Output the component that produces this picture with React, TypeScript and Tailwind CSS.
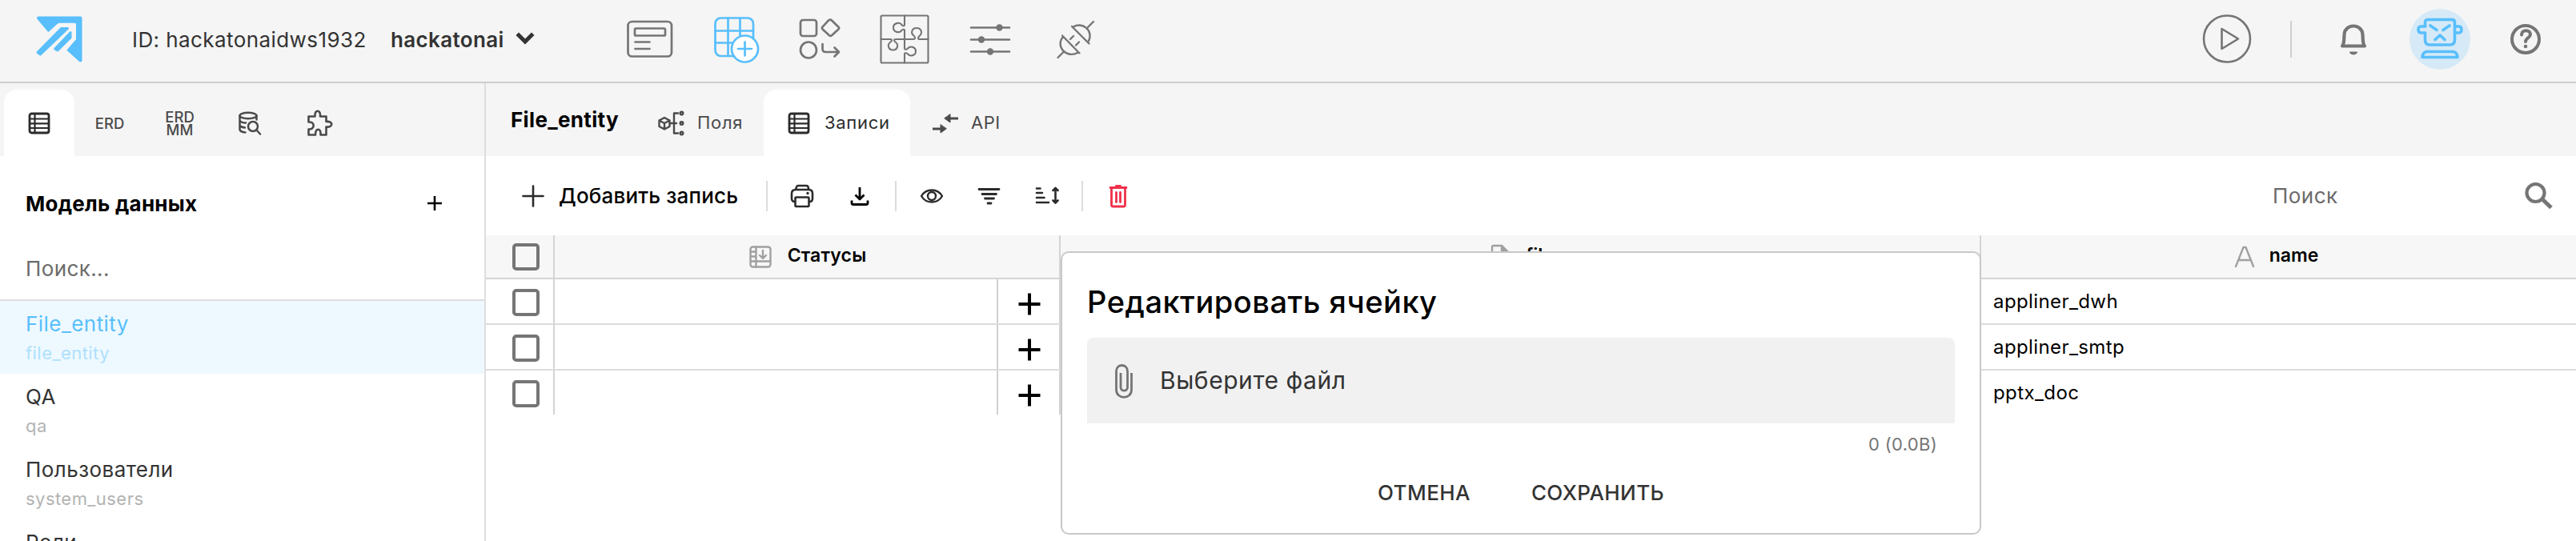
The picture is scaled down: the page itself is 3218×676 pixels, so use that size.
import type { ReactNode } from "react";

type IconProps = { w: number; h: number; className?: string; sw?: number; children: ReactNode };

function Icon({ w, h, className = "", sw = 2.7, children }: IconProps) {
  return (
    <svg
      width={w}
      height={h}
      viewBox={`0 0 ${w} ${h}`}
      fill="none"
      stroke="currentColor"
      strokeWidth={sw}
      strokeLinecap="round"
      strokeLinejoin="round"
      className={`block shrink-0 ${className}`}
    >
      {children}
    </svg>
  );
}

const Logo = () => (
  <Icon w={60} h={60} className="text-[#58bffc]">
    <path
      d="M4 3.500H56.500V56.500L41.500 43L53 30.500V10Q53 8.500 51.500 8.500H30Q28.500 8.500 27.500 9.500L17 19Z"
      fill="currentColor"
      strokeWidth="4"
    />
    <path
      d="M16 21.500L27.500 11Q29 9.800 31 9.800H48Q51 9.800 51 13V30L39.500 43.500L8 52L2 44Z"
      fill="#f5f5f5"
      stroke="none"
    />
    <path d="M32.500 16.500H40.500L6.500 49L3 46.500Z" fill="currentColor" strokeWidth="3" />
    <path d="M44.200 21.500V28L28 44L24.500 42Z" fill="currentColor" strokeWidth="2.600" />
  </Icon>
);

const TableIcon = () => (
  <Icon w={28} h={28} sw={2.2}>
    <rect x="2" y="2" width="24" height="24" rx="2.500" strokeWidth="2.800" />
    <path d="M8.500 2V26M2 8.500H26M2 14.300H26M2 20H26" />
  </Icon>
);

const Divider = () => <div className="h-[38px] w-[2px] shrink-0 bg-[#dcdcdc]" />;

const Checkbox = () => <div className="h-[34px] w-[34px] shrink-0 rounded-[5px] border-4 border-[#757575]" />;

function Header() {
  return (
    <header className="flex h-[104px] w-full shrink-0 items-center border-b-2 border-[#cecece] bg-[#f5f5f5] pb-[4px] text-[#757575]">
      <div className="ml-[44px] mr-[61px]">
        <Logo />
      </div>
      <div className="flex w-[617px] items-center whitespace-nowrap text-[26px] text-[#333]">
        <span className="w-[323px] tracking-[0.420px]">ID: hackatonaidws1932</span>
        <span className="w-[156px] font-semibold tracking-[0.350px]">hackatonai</span>
        <Icon w={24} h={16} sw={5} className="-mt-[2px]">
          <path d="M4 4L12 12L20 4" strokeLinecap="square" strokeLinejoin="miter" />
        </Icon>
      </div>
      <Icon w={60} h={48} className="mr-[48px]">
        <rect x="2.500" y="2" width="54.500" height="43.500" rx="5" />
        <rect x="11" y="10.500" width="38" height="9" rx="1.500" />
        <path d="M11.500 27.500H29.500M11.500 36H29.500" />
      </Icon>
      <Icon w={60} h={60} className="mr-[47px] text-[#58bffc]">
        <rect x="3.500" y="3.500" width="47.500" height="47.500" rx="7" />
        <path d="M19.500 3.500V51M34.500 3.500V51M3.500 19.500H51M3.500 34.500H51" />
        <circle cx="40.500" cy="42" r="16.500" fill="white" />
        <path d="M40.500 33.500V50.500M32 42H49" />
      </Icon>
      <Icon w={54} h={54} className="mr-[48px]">
        <rect x="3" y="3" width="20" height="20" rx="3" />
        <path d="M38.300 3.200Q40.500 2 42 3.500L50.500 11.700Q51.700 13 50.500 14.500L42 22.300Q40.500 23.500 39 22.300L30.500 14.500Q29.300 13 30.500 11.700Z" />
        <circle cx="13" cy="40.500" r="10" />
        <path d="M30.500 33V39Q30.500 43 34.500 43H50.500M45.500 37.500L51 43L45.500 48.500" />
      </Icon>
      <Icon w={62} h={62} className="mr-[50px]" sw={2.1}>
        <rect x="1.500" y="1.500" width="59" height="59" rx="1.500" />
        <path d="M31 1.500V13C31 15 28 14.500 27 12.500C24.500 9.500 17 10.500 17 16.500C17 22.500 24.500 23.500 27 20.500C28 18.500 31 18 31 20V42.500C31 44.500 34 44 35 42.500C38 39 45 40.500 45 46C45 51.500 38 53 35 49.500C34 48 31 47.500 31 49.500V60.500" />
        <path d="M1.500 31H13C16 31 15 33.500 13.500 34.500C9 37.500 10.500 44.500 16.500 44.500C22.500 44.500 24 37.500 19.500 34.500C18 33.500 17 31 20 31H42C45 31 44 28.500 43 27C38 23.500 40 17 46 17C52 17 54 23.500 49.500 27C48 28.500 47 31 50 31H60.500" />
      </Icon>
      <Icon w={52} h={40} className="mr-[56px]" sw={2.6}>
        <path d="M2 5.500H50M2 20.500H50M2 35.500H50" />
        <g fill="currentColor" stroke="none">
          <circle cx="37.500" cy="5.500" r="4.200" />
          <circle cx="15" cy="20.500" r="4.200" />
          <circle cx="26" cy="35.500" r="4.200" />
        </g>
      </Icon>
      <Icon w={50} h={50} sw={2.4}>
        <path d="M20 9L41.500 30.500M21 10C32 2 49 14 40 29M40 10L47 3" />
        <path d="M8 20.500L29.500 42.500M9 22C-1 34 13 50 28 41.500M9.500 41L2.500 48M18 25L22 21M25 32.500L29 28.500" />
      </Icon>
      <Icon w={62} h={62} className="ml-auto mr-[48px]" sw={2.6}>
        <circle cx="31" cy="30.500" r="29" />
        <path d="M24.500 18V43L45 30.500Z" />
      </Icon>
      <div className="mr-[57px] h-[46px] w-[2px] bg-[#cfcfcf]" />
      <Icon w={40} h={42} className="mr-[50px]" sw={4.2}>
        <path d="M6 29.500C9 26 8 20 8.500 15C9.500 1 30.500 1 31.500 15C32 20 31 26 34 29.500Z" />
        <path d="M16 37.500Q20 41.500 24 37.500Z" fill="currentColor" strokeWidth="2" />
      </Icon>
      <div className="mr-[47px] flex h-[76px] w-[76px] items-center justify-center rounded-full bg-[#d6e9f7] text-[#58bffc]">
        <Icon w={60} h={56} sw={3.6}>
          <path d="M11.500 12V7Q11.500 3.500 15 3.500H45Q48.500 3.500 48.500 7V29Q48.500 35 42.500 35H17.500Q11.500 35 11.500 29V20H6.500Q3 20 3 16Q3 12 6.500 12H12M48.500 12H53.500Q57 12 57 16Q57 20 53.500 20H48.500" />
          <path d="M18 11L26 16.500M42 11L34 16.500M24 28.500L30 23L36 28.500" />
          <path d="M14 43.500H46Q51.500 44 52 50.500H8Q8.500 44 14 43.500Z" />
        </Icon>
      </div>
      <Icon w={44} h={42} className="mr-[41px]" sw={4}>
        <circle cx="22" cy="21" r="17" />
        <path d="M17 15.500C17 8.500 28 8.500 28 15C28 19 22 19.500 22 24" />
        <circle cx="22" cy="30" r="2.300" fill="currentColor" stroke="none" />
      </Icon>
    </header>
  );
}

const models = [
  { title: "File_entity", code: "file_entity", active: true },
  { title: "QA", code: "qa", active: false },
  { title: "Пользователи", code: "system_users", active: false },
];

function Sidebar() {
  return (
    <aside className="flex w-[607px] shrink-0 flex-col border-r-2 border-[#dedede]">
      <div className="flex h-[91px] shrink-0 items-end bg-[#f5f5f5] pl-[5px] text-[#4a4a4a]">
        <div className="flex h-[83px] w-[88px] items-center justify-center rounded-t-[16px] bg-white text-[#2b2b2b]">
          <TableIcon />
        </div>
        <div className="flex h-[83px] w-[88px] items-center justify-center pt-[2px] text-[18.500px] font-medium">
          ERD
        </div>
        <div className="flex h-[83px] w-[87px] flex-col items-center justify-center pt-[2px] text-[18.500px] font-medium leading-[15.500px]">
          <span>ERD</span>
          <span>MM</span>
        </div>
        <div className="flex h-[83px] w-[88px] items-center justify-center">
          <Icon w={30} h={30} sw={2.5}>
            <ellipse cx="13" cy="5.500" rx="10.500" ry="3.700" />
            <path d="M2.500 5.500V23Q3.500 26 9.500 26.500M23.500 5.500V10.500M2.500 11.500Q4 14.500 10 14.500M2.500 17.500Q4 20 9 20.500" />
            <circle cx="19" cy="19" r="6" />
            <path d="M23.500 23.500L28 28.500" />
          </Icon>
        </div>
        <div className="flex h-[83px] w-[86px] items-center justify-center">
          <Icon w={34} h={34} sw={2.6}>
            <path d="M3.500 8.500H11.500C10.500 -0.500 19 -0.500 18 8.500H25.500V15C34.500 14 34.500 22.500 25.500 21.500V31.500H18.500C19.500 22.500 11.500 22.500 12 31.500H3.500V24.500C12 25 11.500 14.500 3.500 15.500Z" />
          </Icon>
        </div>
      </div>
      <div className="flex h-[118px] shrink-0 items-center justify-between pl-[32px] pr-[50px] text-[26px] font-bold tracking-[0.250px] text-black">
        Модель данных
        <Icon w={24} h={24} sw={2.6}>
          <path d="M12 3V21M3 12H21" strokeLinecap="butt" />
        </Icon>
      </div>
      <div className="flex h-[63px] shrink-0 items-center border-b-2 border-[#dedede] pb-[17px] pl-[32px] text-[26px] tracking-[0.400px] text-[#6b6b6b]">
        Поиск...
      </div>
      <div className="flex min-h-0 flex-1 flex-col overflow-hidden">
        {models.map((m) => (
          <div
            key={m.code}
            className={
              m.active
                ? "flex h-[91px] shrink-0 flex-col bg-[#eef9ff] pl-[32px] pt-[10px] text-[#58bffc]"
                : "flex h-[91px] shrink-0 flex-col pl-[32px] pt-[10px] text-[#333]"
            }
          >
            <span className="text-[26px] leading-[38px] tracking-[0.450px]">{m.title}</span>
            <span
              className={
                m.active
                  ? "text-[22px] leading-[34px] tracking-[0.450px] text-[#aee0fd]"
                  : "text-[22px] leading-[34px] tracking-[0.450px] text-[#b3b3b3]"
              }
            >
              {m.code}
            </span>
          </div>
        ))}
        <div className="shrink-0 pl-[32px] pt-[10px] text-[26px] leading-[38px] tracking-[0.450px] text-[#333]">
          Роли
        </div>
      </div>
    </aside>
  );
}

function Tabs() {
  return (
    <div className="flex h-[91px] shrink-0 items-end bg-[#f5f5f5] text-[#4a4a4a]">
      <div className="w-[214px] self-center pb-[1px] pl-[31px] text-[26px] font-bold tracking-[0.350px] text-black">
        File_entity
      </div>
      <div className="flex h-[83px] w-[133px] items-center text-[22px] tracking-[0.700px]">
        <Icon w={34} h={32} sw={2.4} className="mr-[16px]">
          <path d="M9 9L15.500 12.500V20L9 23.500L2.500 20V12.500ZM2.500 12.500L9 16L15.500 12.500M9 16V23.500M15.500 16H24M26 3.500H21V28.500H26" />
          <circle cx="30.500" cy="3.500" r="1.800" />
          <circle cx="30.500" cy="16" r="1.800" />
          <circle cx="30.500" cy="28.500" r="1.800" />
        </Icon>
        Поля
      </div>
      <div className="flex h-[83px] w-[183px] items-center rounded-t-[16px] bg-white pl-[30px] text-[22px] tracking-[0.700px] text-[#2b2b2b]">
        <TableIcon />
        <span className="ml-[18px]">Записи</span>
      </div>
      <div className="flex h-[83px] items-center pl-[26px] text-[22px] tracking-[0.500px]">
        <Icon w={36} h={26} sw={3.2} className="mr-[14px]">
          <path d="M23 7H34M2 20H13" strokeLinecap="butt" />
          <path d="M24 2V12L17 7ZM12 15V25L19 20Z" fill="currentColor" strokeWidth="1" />
        </Icon>
        API
      </div>
    </div>
  );
}

function Toolbar() {
  return (
    <div className="flex h-[99px] shrink-0 items-center text-[#2b2b2b]">
      <Icon w={30} h={30} sw={2.6} className="ml-[44px] mr-[17px]">
        <path d="M15 2.500V27.500M2.500 15H27.500" />
      </Icon>
      <span className="w-[259px] whitespace-nowrap text-[26px] font-medium tracking-[0.180px] text-black">
        Добавить запись
      </span>
      <Divider />
      <Icon w={30} h={30} sw={2.6} className="ml-[28px] mr-[45px]">
        <path d="M7 7L8 3.500Q8.300 2 10 2H20.500Q22 2 22.500 3.500L23.500 7M6 22Q2 22 2 18V12Q2 7 7 7H23.500Q28 7 28 12V18Q28 22 24.500 22" />
        <rect x="6.500" y="16.500" width="17" height="11.500" rx="1" />
        <circle cx="22" cy="11.500" r="1.700" fill="currentColor" stroke="none" />
      </Icon>
      <Icon w={24} h={26} sw={2.8} className="mr-[32px] text-black">
        <path d="M12 2V16M6.500 11.500L12 17L17.500 11.500M2 18.500V21.500Q2 23.500 4 23.500H20Q22 23.500 22 21.500V18.500" strokeLinecap="butt" />
      </Icon>
      <Divider />
      <Icon w={30} h={20} sw={2.4} className="ml-[29px] mr-[42px]">
        <path d="M2 10C8 0 22 0 28 10C22 20 8 20 2 10Z" />
        <circle cx="15" cy="10" r="5" />
      </Icon>
      <Icon w={30} h={24} sw={2.8} className="mr-[42px]">
        <path d="M2 3.500H27M6 9.500H23.500M9.500 15H20.500M13 21H17" />
      </Icon>
      <Icon w={30} h={24} sw={2.6} className="mr-[28px]">
        <path d="M2 2.500H6.500M2 8H9M2 14H11.500M2 20H17M25.500 3V20M22.500 5L25.500 2L28.500 5M22.500 17.500L25.500 20.500L28.500 17.500" />
      </Icon>
      <Divider />
      <Icon w={24} h={30} sw={2.8} className="ml-[32px] text-[#f0304a]">
        <path d="M2 4.500H22M9.500 2.500H14.500M3.500 5V26Q3.500 28 5.500 28H18.500Q20.500 28 20.500 26V5M9.500 10.500V22.500M14.500 10.500V22.500" />
      </Icon>
      <span className="ml-auto w-[315px] text-[26px] tracking-[0.450px] text-[#6b6b6b]">Поиск</span>
      <Icon w={36} h={34} sw={4.2} className="mr-[28px] text-[#757575]">
        <circle cx="13.500" cy="13" r="11" />
        <path d="M21.500 20.500L33 31.500" strokeLinecap="butt" strokeWidth="5" />
      </Icon>
    </div>
  );
}

const rows = ["appliner_dwh", "appliner_smtp", "pptx_doc"];

function Table() {
  return (
    <div className="flex flex-col text-black">
      <div className="flex h-[55px] border-b-2 border-[#d4d4d4] bg-[#f7f7f7] text-[23px] font-semibold">
        <div className="flex w-[86px] items-center border-r-2 border-[#d4d4d4] pl-[33px]">
          <Checkbox />
        </div>
        <div className="flex w-[632px] items-center justify-center border-r-2 border-[#d4d4d4] pb-[2px] pl-[2px] tracking-[0.150px]">
          <Icon w={28} h={28} sw={2.4} className="mr-[20px] mt-[2px] text-[#a0a0a0]">
            <rect x="1.500" y="1.500" width="25" height="25" rx="3" />
            <path d="M8.500 1.500V26.500M2 7.500H8M2 13.500H8M2 19.500H26M17 6V15.500M13 12L17 16L21 12" />
          </Icon>
          Статусы
        </div>
        <div className="flex w-[1150px] items-center justify-center border-r-2 border-[#d4d4d4] pb-[3px] pl-[5px]">
          <Icon w={24} h={30} sw={2.4} className="mr-[20px] mt-[2px] text-[#a0a0a0]">
            <path d="M3.500 2H14L21.500 9.500V26Q21.500 28 19.500 28H4Q2 28 2 26V3.500Q2 2 3.500 2Z" />
            <path d="M14 2V9.500H21.500Z" fill="currentColor" />
          </Icon>
          file
        </div>
        <div className="flex flex-1 items-center justify-center pb-[3px] pr-[6px]">
          <Icon w={26} h={28} sw={2.4} className="mr-[18px] mt-[4px] text-[#a0a0a0]">
            <path d="M2 26L11.500 2H14.500L24 26M5.500 18H20.500" />
          </Icon>
          name
        </div>
      </div>
      {rows.map((name, i) => (
        <div
          key={name}
          className={
            i < rows.length - 1
              ? "flex h-[57px] border-b-2 border-[#dcdcdc]"
              : "flex h-[55px]"
          }
        >
          <div className="flex h-full w-[86px] items-start border-r-2 border-[#d4d4d4] pl-[33px] pt-[12px]">
            <Checkbox />
          </div>
          <div className="w-[554px] border-r-2 border-[#d0d0d0]" />
          <div className="flex w-[78px] items-start justify-center border-r-2 border-[#d4d4d4] pl-[1px] pt-[17px]">
            <Icon w={28} h={28} sw={4}>
              <path d="M14 0.500V27.500M0.500 14H27.500" strokeLinecap="butt" />
            </Icon>
          </div>
          <div className="w-[1150px] border-r-2 border-[#d4d4d4]" />
          <div className="flex-1 pl-[15px] pt-[10px] text-[24px] leading-[36px] tracking-[0.400px]">{name}</div>
        </div>
      ))}
    </div>
  );
}

function CellDialog() {
  return (
    <div className="absolute left-[1325px] top-[314px] flex h-[354px] w-[1150px] flex-col rounded-[10px] border-2 border-[#c8c8c8] bg-white px-[31px] text-[#333]">
      <h2 className="mt-[37px] text-[38px] font-medium leading-[48px] tracking-[0.520px] text-black">
        Редактировать ячейку
      </h2>
      <div className="mt-[21px] flex h-[107px] items-center rounded-t-[8px] bg-[#f1f1f1] text-[30px] tracking-[0.550px]">
        <Icon w={24} h={44} sw={2.8} className="ml-[34px] mr-[33px] text-[#757575]">
          <path d="M21.500 12V33C21.500 45.500 2.500 45.500 2.500 33V10C2.500 0 16.500 0 16.500 10V30C16.500 35.500 8 35.500 8 30V12" strokeLinecap="butt" />
        </Icon>
        Выберите файл
      </div>
      <div className="mt-[10px] self-end pr-[22px] text-[22px] leading-[32px] tracking-[0.300px] text-[#757575]">0 (0.0B)</div>
      <div className="mt-[26px] flex justify-center gap-[76px] text-[26px] font-medium leading-[38px] tracking-[0.420px]">
        <span>ОТМЕНА</span>
        <span>СОХРАНИТЬ</span>
      </div>
    </div>
  );
}

export default function App() {
  return (
    <div className="relative flex h-[676px] w-[3218px] flex-col overflow-hidden bg-white font-['Inter',sans-serif]">
      <Header />
      <div className="flex min-h-0 flex-1">
        <Sidebar />
        <main className="flex min-w-0 flex-1 flex-col">
          <Tabs />
          <Toolbar />
          <Table />
        </main>
      </div>
      <CellDialog />
    </div>
  );
}
